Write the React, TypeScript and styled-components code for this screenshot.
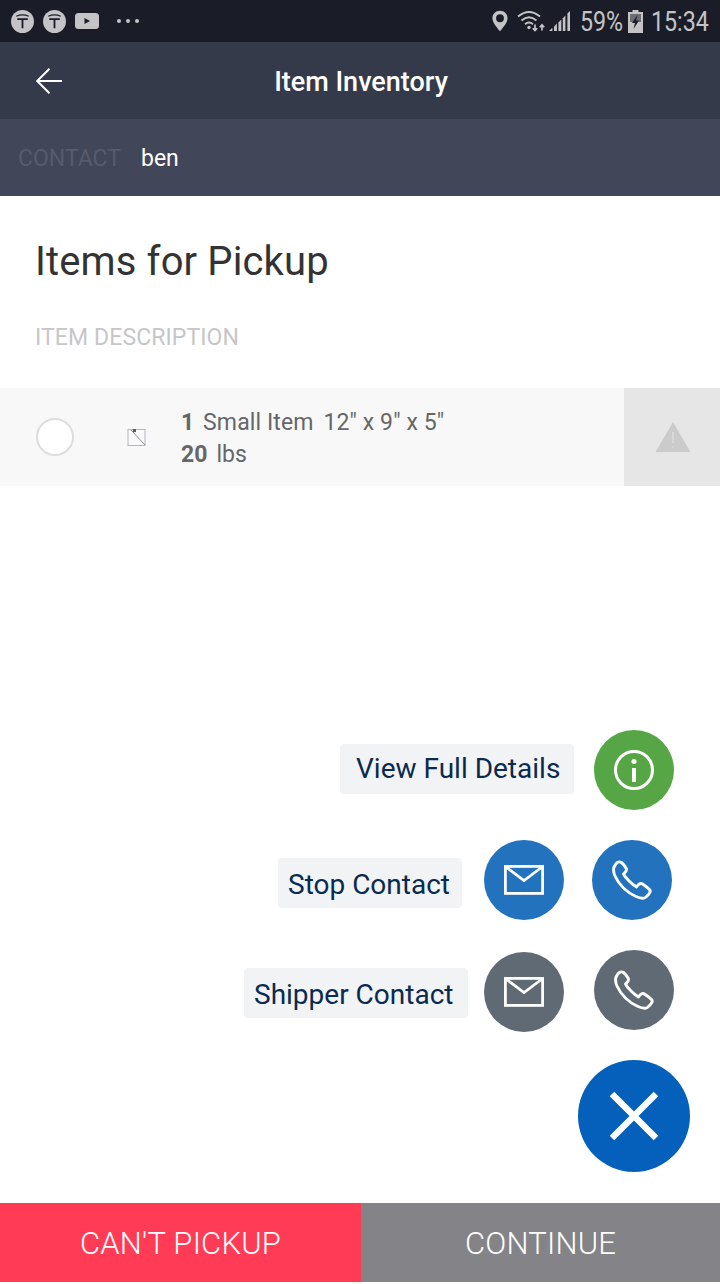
import styled, { createGlobalStyle } from 'styled-components';

const GlobalStyle = createGlobalStyle`
  html, body {
    margin: 0;
    padding: 0;
    background: #fff;
    font-family: Roboto, "Liberation Sans", sans-serif;
  }
`;

const Screen = styled.div`
  position: relative;
  width: 720px;
  height: 1284px;
  display: flex;
  flex-direction: column;
  overflow: hidden;
  background: #fff;
`;

const StatusBar = styled.div`
  height: 42px;
  flex: none;
  display: flex;
  align-items: center;
  justify-content: space-between;
  padding: 0 12px 0 11px;
  background: #1a1d28;
  color: #c4c4c6;
`;

const StatusGroup = styled.div<{ $gap: number }>`
  display: flex;
  align-items: center;
  gap: ${p => p.$gap}px;
`;

const StatusIcon = styled.div<{ $mr: number }>`
  display: flex;
  margin-right: ${p => p.$mr}px;
`;

const StatusText = styled.span<{ $w: number; $mr?: number }>`
  width: ${p => p.$w}px;
  margin-right: ${p => p.$mr ?? 0}px;
  padding-top: 2px;
  font-size: 27px;
  line-height: 40px;
  white-space: nowrap;
  transform: scaleX(0.86);
  transform-origin: left center;
`;

const Dots = styled.div`
  display: flex;
  gap: 5px;
  margin-left: 9px;
`;

const Dot = styled.i`
  width: 4px;
  height: 4px;
  border-radius: 50%;
  background: #c4c4c6;
`;

const Header = styled.header`
  height: 77px;
  flex: none;
  display: flex;
  align-items: center;
  justify-content: center;
  position: relative;
  background: #353a4a;
`;

const BackButton = styled.div`
  position: absolute;
  left: 36px;
  top: 26px;
  display: flex;
`;

const HeaderTitle = styled.h1`
  margin: 2px 0 0 2px;
  font-size: 27px;
  font-weight: 500;
  color: #fff;
`;

const ContactBar = styled.div`
  height: 77px;
  flex: none;
  box-sizing: border-box;
  display: flex;
  align-items: center;
  gap: 20px;
  padding: 2px 0 0 18px;
  background: #414659;
  font-size: 23px;
`;

const ContactLabel = styled.span`
  color: #575c6c;
`;

const ContactValue = styled.span`
  color: #fff;
`;

const Content = styled.main`
  flex: 1;
  display: flex;
  flex-direction: column;
`;

const SectionTitle = styled.h2`
  margin: 41px 0 0 35px;
  font-size: 40px;
  line-height: 50px;
  font-weight: 400;
  letter-spacing: 0.13px;
  color: #333;
`;

const ColumnLabel = styled.div`
  margin: 37px 0 0 35px;
  font-size: 23px;
  line-height: 28px;
  letter-spacing: 0.1px;
  color: #c6c6c8;
`;

const ItemRow = styled.div`
  margin-top: 36px;
  height: 98px;
  display: flex;
  align-items: center;
  background: #f8f8f8;
`;

const Radio = styled.div`
  width: 34px;
  height: 34px;
  margin-left: 36px;
  border: 2px solid #dddddd;
  border-radius: 50%;
  background: #fff;
  flex: none;
`;

const Thumb = styled.div`
  display: flex;
  margin-left: 53px;
  flex: none;
`;

const ItemText = styled.div`
  margin: 4px 0 0 34px;
  flex: 1;
  font-size: 23px;
  line-height: 32px;
  letter-spacing: 0.1px;
  color: #666668;
`;

const ItemLine = styled.div`
  display: flex;
  gap: 10px;
`;

const Strong = styled.b`
  font-weight: 700;
  margin-right: 3px;
`;

const WarnCell = styled.div`
  width: 96px;
  height: 98px;
  flex: none;
  display: flex;
  align-items: center;
  justify-content: center;
  padding-left: 2px;
  box-sizing: border-box;
  background: #e6e6e6;
`;

const FooterBar = styled.footer`
  height: 79px;
  margin-bottom: 2px;
  flex: none;
  display: flex;
`;

const FooterButton = styled.div<{ $bg: string; $w: number }>`
  width: ${p => p.$w}px;
  display: flex;
  align-items: center;
  justify-content: center;
  padding-top: 2px;
  box-sizing: border-box;
  background: ${p => p.$bg};
  color: #fff;
  font-size: 31px;
  font-weight: 300;
  letter-spacing: 0.2px;
`;

const FabStack = styled.div`
  position: absolute;
  left: 0;
  right: 0;
  top: 730px;
  display: flex;
  flex-direction: column;
`;

const FabRow = styled.div<{ $top: number; $right: number }>`
  margin-top: ${p => p.$top}px;
  padding-right: ${p => p.$right}px;
  display: flex;
  align-items: flex-start;
  justify-content: flex-end;
`;

const FabLabel = styled.div<{ $w: number; $top: number; $mr: number; $pad: string }>`
  width: ${p => p.$w}px;
  height: 50px;
  box-sizing: border-box;
  margin-top: ${p => p.$top}px;
  margin-right: ${p => p.$mr}px;
  padding: ${p => p.$pad};
  display: flex;
  align-items: center;
  border-radius: 4px;
  background: #f2f3f5;
  color: #0a2a4f;
  font-size: 28px;
  white-space: nowrap;
`;

const Fab = styled.div<{ $bg: string; $size?: number; $mr?: number; $top?: number }>`
  width: ${p => p.$size ?? 80}px;
  height: ${p => p.$size ?? 80}px;
  margin-right: ${p => p.$mr ?? 0}px;
  margin-top: ${p => p.$top ?? 0}px;
  flex: none;
  display: flex;
  align-items: center;
  justify-content: center;
  border-radius: 50%;
  background: ${p => p.$bg};
`;

const TIcon = () => (
  <svg width="23" height="23" viewBox="0 0 24 24">
    <circle cx="12" cy="12" r="12" fill="#c4c4c6" />
    <path d="M5.5 6.5 Q12 3.6 18.5 6.5" fill="none" stroke="#1a1d28" strokeWidth="1.2" />
    <path d="M6.5 9.5 H17.5 M12 9.5 V19" fill="none" stroke="#1a1d28" strokeWidth="1.9" />
  </svg>
);

const YoutubeIcon = () => (
  <svg width="24" height="18" viewBox="0 0 24 18">
    <rect width="24" height="16" y="1" rx="3.5" fill="#c4c4c6" />
    <path d="M9.5 6 L15 9 L9.5 12 Z" fill="#1a1d28" />
  </svg>
);

const PinIcon = () => (
  <svg width="16" height="22" viewBox="0 0 18 24">
    <path
      fillRule="evenodd"
      d="M9 0.5 C4 0.5 0.5 4.2 0.5 8.8 C0.5 14 6 19.5 9 23.5 C12 19.5 17.5 14 17.5 8.8 C17.5 4.2 14 0.5 9 0.5 Z M9 4.5 A4.4 4.4 0 1 1 9 13.3 A4.4 4.4 0 0 1 9 4.5 Z"
      fill="#c4c4c6"
    />
  </svg>
);

const WifiIcon = () => (
  <svg width="29" height="22" viewBox="0 0 29 22" fill="none" stroke="#c4c4c6" strokeWidth="1.9">
    <path d="M1 6.5 Q12 -2.5 23 6.5" />
    <path d="M4.5 10.5 Q12 4 19.5 10.5" />
    <path d="M8 14.2 Q12 11 16 14.2" />
    <circle cx="12" cy="17.5" r="1.7" fill="#c4c4c6" stroke="none" />
    <path d="M18 14.5 V20.5 M15.8 18.2 L18 20.6 L20.2 18.2 M25 20.5 V15 M22.8 17.2 L25 14.8 L27.2 17.2" strokeWidth="1.7" />
  </svg>
);

const SignalIcon = () => (
  <svg width="22" height="22" viewBox="0 0 22 22" fill="#c4c4c6">
    <path d="M0 21 L3.4 17.8 V21 Z" />
    <path d="M5 16.4 L7.9 13.6 V21 H5 Z" />
    <path d="M9.4 12.4 L12.3 9.6 V21 H9.4 Z" />
    <path d="M13.8 8.2 L16.4 5.6 V21 H13.8 Z" />
    <path d="M18.4 3.4 L21 1 V21 H18.4 Z" />
  </svg>
);

const BatteryIcon = () => (
  <svg width="15" height="23" viewBox="0 0 15 23">
    <path d="M4.5 0 H10.5 V2 H15 V23 H0 V2 H4.5 Z" fill="#c4c4c6" />
    <rect x="2" y="4" width="11" height="8" fill="#6c6d72" />
    <path d="M9.5 5 L4 13 H7 L5.5 19 L11 10.5 H8 Z" fill="#1a1d28" />
  </svg>
);

const ArrowLeft = () => (
  <svg width="26" height="26" viewBox="0 0 26 26" fill="none" stroke="#fff" strokeWidth="2">
    <path d="M1 13 H26 M13.5 0.8 L1.2 13 L13.5 25.2" />
  </svg>
);

const BrokenImage = () => (
  <svg width="20" height="20" viewBox="0 0 20 20" fill="none">
    <rect x="1" y="2.5" width="17" height="16" stroke="#b3b6bf" fill="#fafafa" />
    <path d="M4 3 L18 18" stroke="#8d9099" />
    <rect x="6" y="2" width="3" height="3" fill="#5a5d6a" />
  </svg>
);

const WarningIcon = () => (
  <svg width="36" height="32" viewBox="0 0 36 32">
    <path d="M18 1 L35.5 31 H0.5 Z" fill="#cbcbcb" />
    <path d="M18 11 V22 M18 25 V27" stroke="#dcdcdc" strokeWidth="1.4" />
  </svg>
);

const InfoIcon = () => (
  <svg width="42" height="42" viewBox="0 0 42 42" fill="none" stroke="#fff">
    <circle cx="21" cy="21" r="18.5" strokeWidth="3" />
    <circle cx="21" cy="12.5" r="2.6" fill="#fff" stroke="none" />
    <path d="M21 19 V33" strokeWidth="4" />
  </svg>
);

const MailIcon = () => (
  <svg width="40" height="30" viewBox="0 0 40 30" fill="none" stroke="#fff">
    <rect x="1.4" y="1.4" width="37.2" height="27" strokeWidth="2.8" />
    <path d="M2 2 L20 15.5 L38 2" strokeWidth="2.8" />
  </svg>
);

const PhoneIcon = () => (
  <svg width="40" height="40" viewBox="0 0 40 40" fill="none" stroke="#fff" strokeWidth="2.9" strokeLinejoin="round">
    <path d="M3.5 4.5 C5 2.5 7.5 1 9.5 2.5 C11 3.7 13.5 7 14.3 8.5 C15 10 14 11.5 12.5 13 L11.5 14 C13.5 18 20 24.5 24.5 27 L26 25 C27.5 23.5 29 23 30.5 24 C32 25 36 28 37.5 29.5 C38.8 31 38 33 36.5 34.5 L34 37 C32 38.7 28.5 38.5 24 36.5 C15 32.5 7 24.5 3 16 C1 11.5 1.5 7 3.5 4.5 Z" />
  </svg>
);

const CloseIcon = () => (
  <svg width="50" height="50" viewBox="0 0 50 50" fill="none" stroke="#fff" strokeWidth="6.4">
    <path d="M3 3 L47 47 M47 3 L3 47" />
  </svg>
);

export default function App() {
  return (
    <Screen>
      <GlobalStyle />
      <StatusBar>
        <StatusGroup $gap={9}>
          <TIcon />
          <TIcon />
          <YoutubeIcon />
          <Dots>
            <Dot />
            <Dot />
            <Dot />
          </Dots>
        </StatusGroup>
        <StatusGroup $gap={0}>
          <StatusIcon $mr={9}>
            <PinIcon />
          </StatusIcon>
          <StatusIcon $mr={3}>
            <WifiIcon />
          </StatusIcon>
          <StatusIcon $mr={9}>
            <SignalIcon />
          </StatusIcon>
          <StatusText $w={42} $mr={6}>59%</StatusText>
          <StatusIcon $mr={8}>
            <BatteryIcon />
          </StatusIcon>
          <StatusText $w={57}>15:34</StatusText>
        </StatusGroup>
      </StatusBar>

      <Header>
        <BackButton>
          <ArrowLeft />
        </BackButton>
        <HeaderTitle>Item Inventory</HeaderTitle>
      </Header>

      <ContactBar>
        <ContactLabel>CONTACT</ContactLabel>
        <ContactValue>ben</ContactValue>
      </ContactBar>

      <Content>
        <SectionTitle>Items for Pickup</SectionTitle>
        <ColumnLabel>ITEM DESCRIPTION</ColumnLabel>
        <ItemRow>
          <Radio />
          <Thumb>
            <BrokenImage />
          </Thumb>
          <ItemText>
            <ItemLine>
              <span>
                <Strong>1</Strong> Small Item
              </span>
              <span>12" x 9" x 5"</span>
            </ItemLine>
            <ItemLine>
              <span>
                <Strong>20</Strong> lbs
              </span>
            </ItemLine>
          </ItemText>
          <WarnCell>
            <WarningIcon />
          </WarnCell>
        </ItemRow>
      </Content>

      <FooterBar>
        <FooterButton $bg="#ff3b55" $w={361}>CAN'T PICKUP</FooterButton>
        <FooterButton $bg="#848387" $w={359}>CONTINUE</FooterButton>
      </FooterBar>

      <FabStack>
        <FabRow $top={0} $right={46}>
          <FabLabel $w={234} $top={14} $mr={20} $pad="0 0 2px 16px">View Full Details</FabLabel>
          <Fab $bg="#57a645">
            <InfoIcon />
          </Fab>
        </FabRow>
        <FabRow $top={30} $right={48}>
          <FabLabel $w={184} $top={18} $mr={22} $pad="2px 0 0 10px">Stop Contact</FabLabel>
          <Fab $bg="#2272bd" $mr={28}>
            <MailIcon />
          </Fab>
          <Fab $bg="#2272bd">
            <PhoneIcon />
          </Fab>
        </FabRow>
        <FabRow $top={30} $right={46}>
          <FabLabel $w={224} $top={18} $mr={16} $pad="2px 0 0 10px">Shipper Contact</FabLabel>
          <Fab $bg="#5f6a75" $mr={30} $top={2}>
            <MailIcon />
          </Fab>
          <Fab $bg="#5f6a75">
            <PhoneIcon />
          </Fab>
        </FabRow>
        <FabRow $top={28} $right={30}>
          <Fab $bg="#0460bb" $size={112}>
            <CloseIcon />
          </Fab>
        </FabRow>
      </FabStack>
    </Screen>
  );
}
